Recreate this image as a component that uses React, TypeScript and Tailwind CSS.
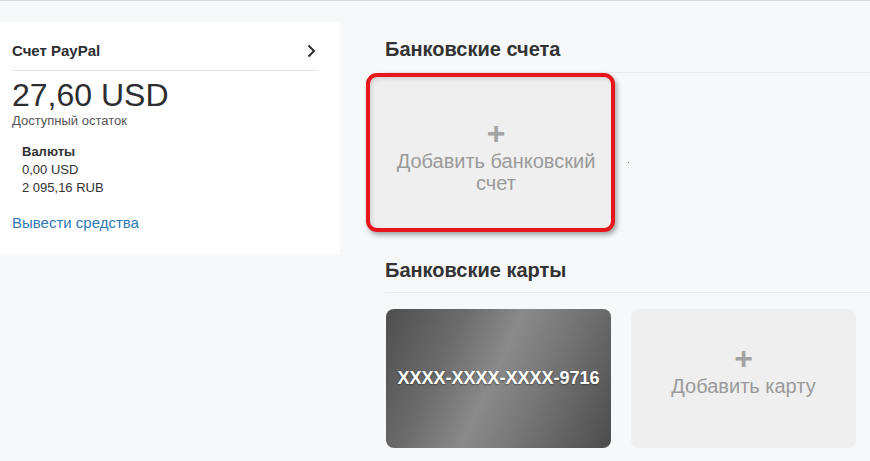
import React from 'react';

const font = { fontFamily: '"Liberation Sans", Arial, sans-serif' };

const Chevron = () => (
  <svg width="14" height="14" viewBox="0 0 14 14" fill="none">
    <path d="M4.5 1.5 L10 7 L4.5 12.5" stroke="#2c2e2f" strokeWidth="2" />
  </svg>
);

const AddTile: React.FC<{ lines: string[]; top: string }> = ({ lines, top }) => (
  <div className={`flex h-full w-full flex-col items-center text-[#9a9a9a] ${top}`}>
    <span className="text-[32px] leading-[34px] font-bold text-[#a3a3a3]">+</span>
    {lines.map((l) => (
      <span key={l} className="text-[20px] leading-[22px]">
        {l}
      </span>
    ))}
  </div>
);

export default function App() {
  return (
    <div
      className="flex h-[461px] w-[870px] overflow-hidden border-t border-[#d6d8db] bg-[#f7f8fa] text-[#333]"
      style={font}
    >
      {/* balance panel */}
      <div className="w-[340px] shrink-0 pt-[21px]">
        <div className="h-[233px] bg-white pl-3 pr-[22px]">
          <div className="flex items-center justify-between border-b border-[#e3e4e6] pt-[20px] pb-[10px]">
            <span className="text-[15px] leading-[18px] font-bold text-[#2c2e2f]">Счет PayPal</span>
            <Chevron />
          </div>
          <div className="mt-[6px] text-[32px] leading-[36px] text-[#2c2e2f]">27,60 USD</div>
          <div className="text-[13px] leading-[16px] text-[#555]">Доступный остаток</div>
          <div className="mt-[14px] pl-[10px] text-[13px] leading-[18px] text-[#333]">
            <div className="font-bold">Валюты</div>
            <div>0,00 USD</div>
            <div>2 095,16 RUB</div>
          </div>
          <div className="mt-[17px] text-[15px] leading-[18px] text-[#2d7ab5]">Вывести средства</div>
        </div>
      </div>

      {/* accounts & cards */}
      <div className="ml-[45px] flex-1">
        <div className="border-b border-[#e8e9eb] pt-[37px] pb-[11px] text-[20px] leading-[23px] font-bold text-[#333]">
          Банковские счета
        </div>
        <div className="flex items-center">
          <div className="-ml-[19px] h-[159px] w-[249px] rounded-[11px] border-[4px] border-[#e8161b] bg-[#efefef] shadow-[2px_3px_5px_rgba(0,0,0,0.35)]">
            <div className="h-full w-full rounded-[7px] pl-[11px] shadow-[inset_2px_2px_4px_rgba(0,0,0,0.12)]">
              <AddTile top="pt-[39px]" lines={['Добавить банковский', 'счет']} />
            </div>
          </div>
          <div className="ml-[13px] mt-[20px] h-[1px] w-[1px] bg-[#777]" />
        </div>

        <div className="mt-[27px] border-b border-[#e8e9eb] pb-[10px] text-[20px] leading-[23px] font-bold text-[#333]">
          Банковские карты
        </div>
        <div className="mt-[16px] flex gap-[20px] pl-[1px]">
          <div className="flex h-[139px] w-[225px] items-center justify-center rounded-[8px] bg-[linear-gradient(115deg,#4e4e4e_0%,#6c6c6c_28%,#8a8a8a_48%,#767676_66%,#4c4c4c_100%)]">
            <span className="text-[18px] font-bold text-white [text-shadow:0_1px_2px_rgba(0,0,0,0.4)]">
              XXXX-XXXX-XXXX-9716
            </span>
          </div>
          <div className="h-[139px] w-[225px] rounded-[8px] bg-[#efefef]">
            <AddTile top="pt-[32px]" lines={['Добавить карту']} />
          </div>
        </div>
      </div>
    </div>
  );
}
